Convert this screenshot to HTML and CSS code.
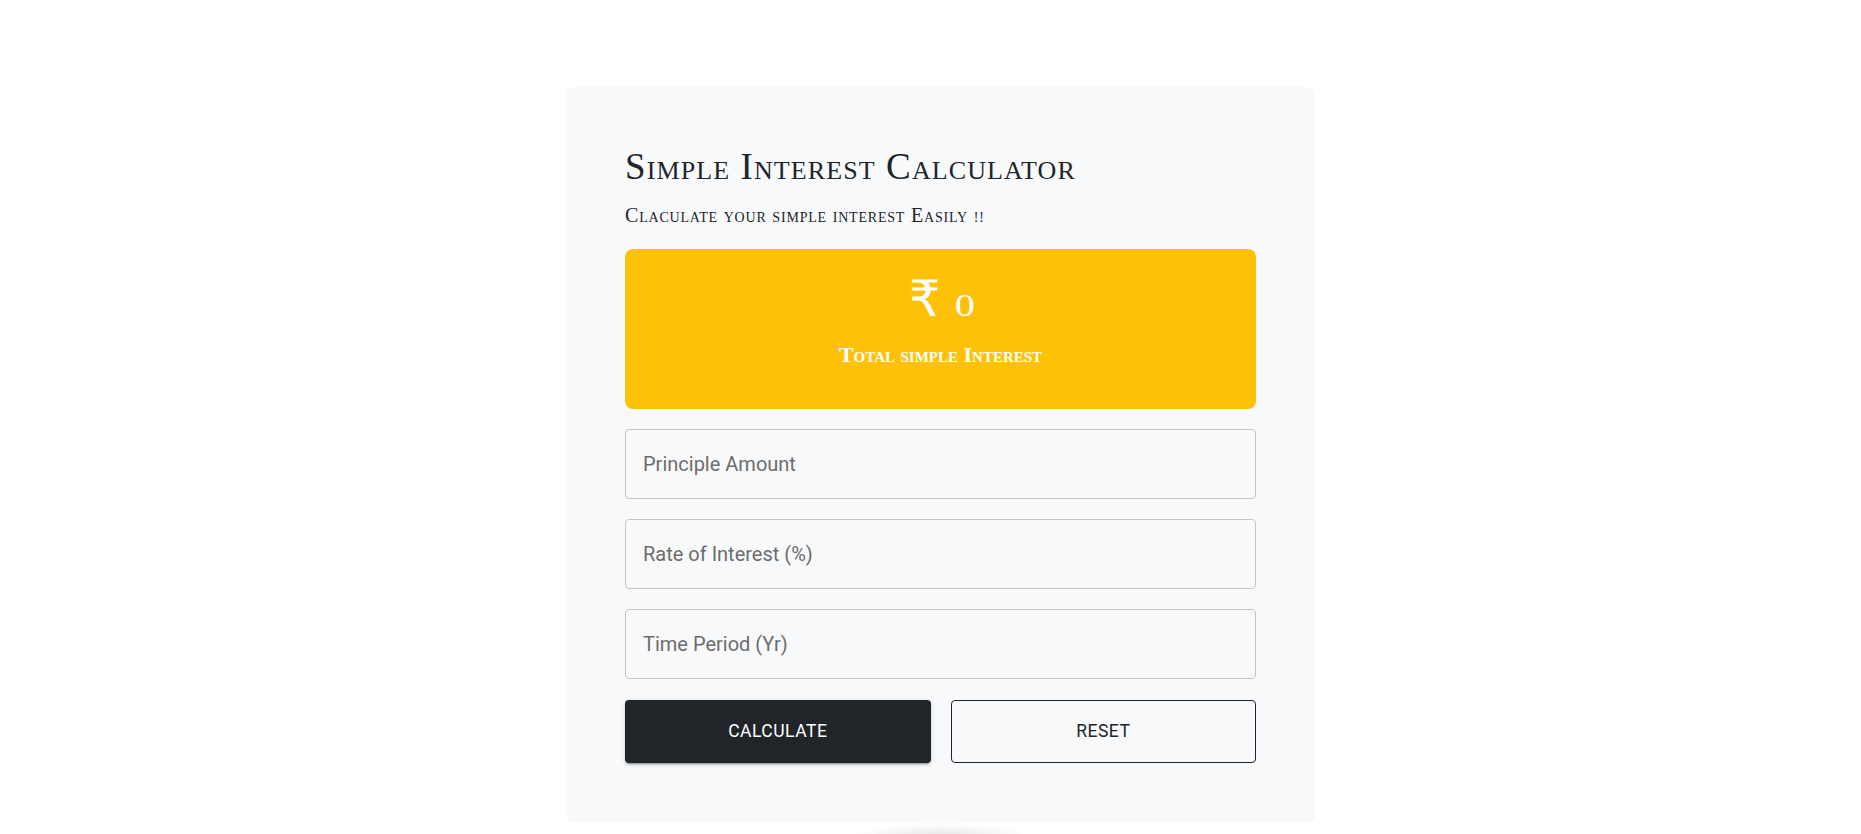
FILE: index.html
```html
<!DOCTYPE html>
<html lang="en">
<head>
<meta charset="utf-8">
<title>Simple Interest Calculator</title>
<link rel="stylesheet" href="styles.css">
</head>
<body>
<div class="page">
  <div class="card">
    <h1 class="title">Simple Interest Calculator</h1>
    <p class="subtitle">Claculate your simple interest Easily <span class="bang">!!</span></p>
    <div class="result">
      <div class="amount"><span class="rupee">₹</span> <span class="digit">0</span></div>
      <div class="result-label">Total simple Interest</div>
    </div>
    <form class="form">
      <div class="field"><input type="text" placeholder="Principle Amount"></div>
      <div class="field"><input type="text" placeholder="Rate of Interest (%)"></div>
      <div class="field"><input type="text" placeholder="Time Period (Yr)"></div>
      <div class="actions">
        <button type="button" class="btn btn-dark">CALCULATE</button>
        <button type="button" class="btn btn-outline">RESET</button>
      </div>
    </form>
  </div>
</div>
</body>
</html>
```

FILE: styles.css
```css
* { box-sizing: border-box; }
html, body { margin: 0; padding: 0; background: #ffffff; height: 100%; overflow: hidden; }
body { font-family: "Liberation Serif", serif; color: #212529; }

.page {
  display: flex;
  justify-content: center;
  padding: 87px 0 0 20px;
}

.card {
  position: relative;
  width: 749px;
  background: #f8f9fa;
  border-radius: 8px;
  padding: 58px 59px 60px 59px;
}

.card::after {
  content: "";
  position: absolute;
  left: 50%;
  top: 100%;
  width: 180px;
  height: 14px;
  margin-left: -90px;
  background: radial-gradient(ellipse 50% 100% at 50% 100%, rgba(0,0,0,0.10), rgba(0,0,0,0) 100%);
}

.title {
  margin: 0;
  font-family: "Liberation Serif", serif;
  font-weight: 400;
  font-size: 37px;
  line-height: 1.2;
  letter-spacing: 1.1px;
  font-variant: small-caps;
  color: #212529;
}

.subtitle {
  margin: 14px 0 0 0;
  font-family: "Liberation Serif", serif;
  font-size: 20px;
  line-height: 1.2;
  letter-spacing: 0.8px;
  font-variant: small-caps;
  color: #212529;
}

.bang {
  font-size: 14px;
}

.result {
  margin-top: 22px;
  background: #ffc107;
  border-radius: 8px;
  padding: 21px 16px 40px;
  text-align: center;
  color: #ffffff;
}

.amount {
  font-family: "Liberation Serif", serif;
  font-size: 48px;
  line-height: 58px;
  height: 58px;
}

.rupee {
  font-family: "DejaVu Sans", "Noto Sans", sans-serif;
  font-size: 50px;
}

.digit {
  display: inline-block;
  font-size: 31px;
  transform: scaleX(1.3);
  margin-left: 4px;
}

.result-label {
  margin-top: 14px;
  font-family: "Liberation Serif", serif;
  font-weight: 700;
  font-size: 22px;
  line-height: 1.2;
  font-variant: small-caps;
}

.form {
  margin: 20px 0 0 0;
  display: flex;
  flex-direction: column;
  gap: 20px;
}

.field input {
  display: block;
  width: 100%;
  height: 70px;
  border: 1px solid #c4c4c4;
  border-radius: 4px;
  background: transparent;
  padding: 0 17px;
  font-family: Roboto, "Liberation Sans", sans-serif;
  font-size: 20px;
  color: #212529;
  outline: none;
}

.field input::placeholder {
  color: #6c6d6e;
  opacity: 1;
}

.actions {
  margin-top: 1px;
  display: grid;
  grid-template-columns: 1fr 1fr;
  gap: 20px;
}

.btn {
  height: 63px;
  border-radius: 4px;
  font-family: Roboto, "Liberation Sans", sans-serif;
  font-size: 17.5px;
  font-weight: 400;
  letter-spacing: 0.02857em;
  cursor: pointer;
}

.btn-dark {
  background: #212529;
  color: #ffffff;
  border: none;
  box-shadow: 0 3px 1px -2px rgba(0,0,0,0.2), 0 2px 2px 0 rgba(0,0,0,0.14), 0 1px 5px 0 rgba(0,0,0,0.12);
}

.btn-outline {
  background: transparent;
  color: #212529;
  border: 1px solid #212529;
}
```
